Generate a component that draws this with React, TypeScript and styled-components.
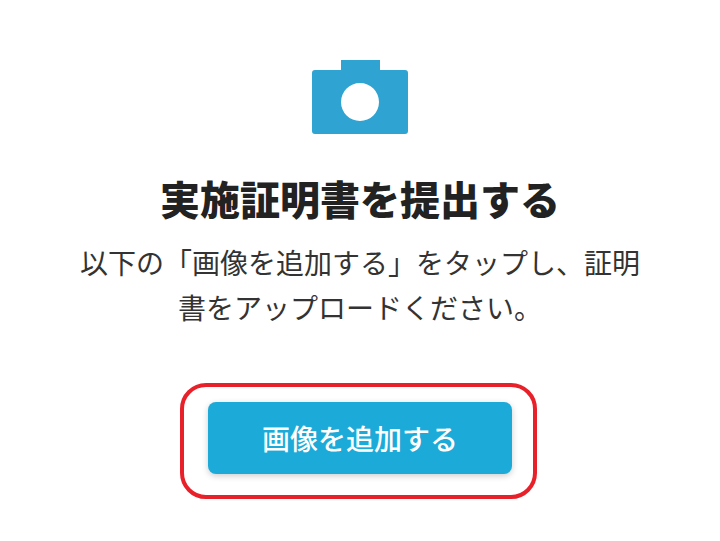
import React from "react";
import styled, { createGlobalStyle } from "styled-components";

const GlobalStyle = createGlobalStyle`
  html, body {
    margin: 0;
    padding: 0;
    background: #fff;
  }
  body {
    font-family: "Noto Sans CJK JP", "Noto Sans", sans-serif;
  }
`;

const Page = styled.div`
  width: 720px;
  height: 541px;
  box-sizing: border-box;
  display: flex;
  flex-direction: column;
  align-items: center;
  padding-top: 60px;
  overflow: hidden;
`;

const CameraIcon = styled.svg`
  display: block;
  width: 96px;
  height: 74px;
`;

const Title = styled.h1`
  margin: 36px 0 0;
  font-size: 40px;
  line-height: 56px;
  font-weight: 900;
  color: #222;
`;

const Message = styled.p`
  margin: 14px 0 0;
  width: 580px;
  font-size: 28px;
  line-height: 45px;
  font-weight: 400;
  color: #333;
  text-align: center;
`;

const Highlight = styled.div`
  margin: 53px 3px 0 0;
  width: 357px;
  height: 116px;
  box-sizing: border-box;
  border: 4px solid #e8202a;
  border-radius: 26px;
  padding: 15px 21px 0 24px;
`;

const AddButton = styled.button`
  display: block;
  width: 304px;
  height: 72px;
  border: 0;
  padding: 0;
  border-radius: 8px;
  background: #1caad9;
  color: #fff;
  font-family: inherit;
  font-size: 28px;
  font-weight: 500;
  box-shadow: 0 2px 6px rgba(0, 0, 0, 0.2);
`;

const App = () => {
  return (
    <Page>
      <GlobalStyle />
      <CameraIcon viewBox="0 0 96 74">
        <path
          fill="#2fa3d2"
          fillRule="evenodd"
          d="M29 0h39v10h25a3 3 0 0 1 3 3v58a3 3 0 0 1-3 3H3a3 3 0 0 1-3-3V13a3 3 0 0 1 3-3h26zM48 23a19 19 0 1 0 0 38 19 19 0 0 0 0-38z"
        />
      </CameraIcon>
      <Title>実施証明書を提出する</Title>
      <Message>以下の「画像を追加する」をタップし、証明書をアップロードください。</Message>
      <Highlight>
        <AddButton>画像を追加する</AddButton>
      </Highlight>
    </Page>
  );
};

export default App;
